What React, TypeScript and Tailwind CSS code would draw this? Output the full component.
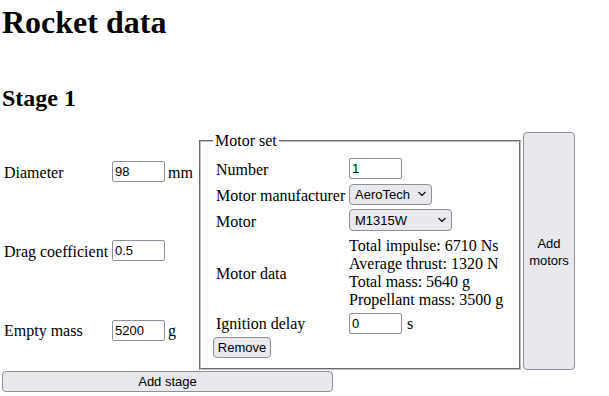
import React from "react";

const serif = { fontFamily: '"Liberation Serif", "Times New Roman", serif' };

const ctl =
  "font-['Liberation_Sans',Arial,sans-serif] text-[13px] leading-[15px] text-black";

const Chevron = () => (
  <svg
    width="8"
    height="5"
    viewBox="0 0 8 5"
    className="pointer-events-none absolute right-[6px] top-1/2 -translate-y-1/2"
  >
    <path
      d="M0.8 0.8 L4 4 L7.2 0.8"
      fill="none"
      stroke="#1c1c1c"
      strokeWidth="1.3"
      strokeLinecap="round"
      strokeLinejoin="round"
    />
  </svg>
);

function TextInput({ value, w = "w-[53px]" }: { value: string; w?: string }) {
  return (
    <input
      type="text"
      defaultValue={value}
      className={`${ctl} ${w} h-[21px] bg-white border border-[#8f8f9d] rounded-[2px] px-[2px] outline-none`}
    />
  );
}

function Select({ value, w }: { value: string; w: string }) {
  return (
    <div className={`relative ${w} h-[21px]`}>
      <select
        defaultValue={value}
        className={`${ctl} appearance-none w-full h-full bg-[#e9e9ed] border border-[#8f8f9d] rounded-[4px] pl-[5px] pr-[16px] outline-none`}
      >
        <option>{value}</option>
      </select>
      <Chevron />
    </div>
  );
}

const btn = `${ctl} bg-[#e9e9ed] border border-[#8f8f9d] rounded-[4px] text-center`;

export default function App() {
  return (
    <div className="w-[609px] h-[396px] bg-white text-black overflow-hidden" style={serif}>
      <h1 className="text-[32px] font-bold leading-[37px] mt-[4px] pl-[2px]">Rocket data</h1>
      <h2 className="text-[24px] font-bold leading-[28px] mt-[43px] pl-[2px]">Stage 1</h2>

      <div className="flex gap-[2px] pl-[2px] mt-[20px] h-[238px] text-[16px] leading-[18px]">
        {/* left column */}
        <div className="w-[195px] pl-[2px] grid grid-rows-3 grid-cols-[108px_56px_auto] items-center">
          <span className="pt-[2px]">Diameter</span>
          <TextInput value="98" />
          <span className="pt-[2px]">mm</span>
          <span className="pt-[2px]">Drag coefficient</span>
          <TextInput value="0.5" />
          <span></span>
          <span className="pt-[2px]">Empty mass</span>
          <TextInput value="5200" />
          <span className="pt-[2px]">g</span>
        </div>

        {/* motor set */}
        <fieldset className="w-[322px] h-[238px] border-2 [border-style:groove] border-[#c0c0c0] px-[12px] pt-[6px] pb-[10px]">
          <legend className="px-[2px] leading-[18px]">Motor set</legend>
          <div className="grid grid-cols-[133px_auto] grid-rows-[24px_24px_24px_76px_23px] gap-y-[2px] pl-[3px] items-center">
            <span className="pt-[3px]">Number</span>
            <div>
              <TextInput value="1" />
            </div>
            <span className="pt-[3px]">Motor manufacturer</span>
            <Select value="AeroTech" w="w-[83px]" />
            <span className="pt-[3px]">Motor</span>
            <Select value="M1315W" w="w-[103px] h-[22px]" />
            <span className="pt-[3px]">Motor data</span>
            <div className="flex flex-col leading-[18px] self-start pt-[3px]">
              <span>Total impulse: 6710 Ns</span>
              <span>Average thrust: 1320 N</span>
              <span>Total mass: 5640 g</span>
              <span>Propellant mass: 3500 g</span>
            </div>
            <span className="pt-[1px]">Ignition delay</span>
            <div className="flex items-center gap-[5px]">
              <TextInput value="0" />
              <span className="pt-[1px]">s</span>
            </div>
          </div>
          <button className={`${btn} mt-[2px] w-[58px] h-[21px]`}>Remove</button>
        </fieldset>

        {/* add motors */}
        <button className={`${btn} w-[52px] h-[238px] leading-[17px] pt-[1px]`}>
          Add
          <br />
          motors
        </button>
      </div>

      <button className={`${btn} ml-[2px] mt-[1px] w-[331px] h-[21px] block`}>Add stage</button>
    </div>
  );
}
